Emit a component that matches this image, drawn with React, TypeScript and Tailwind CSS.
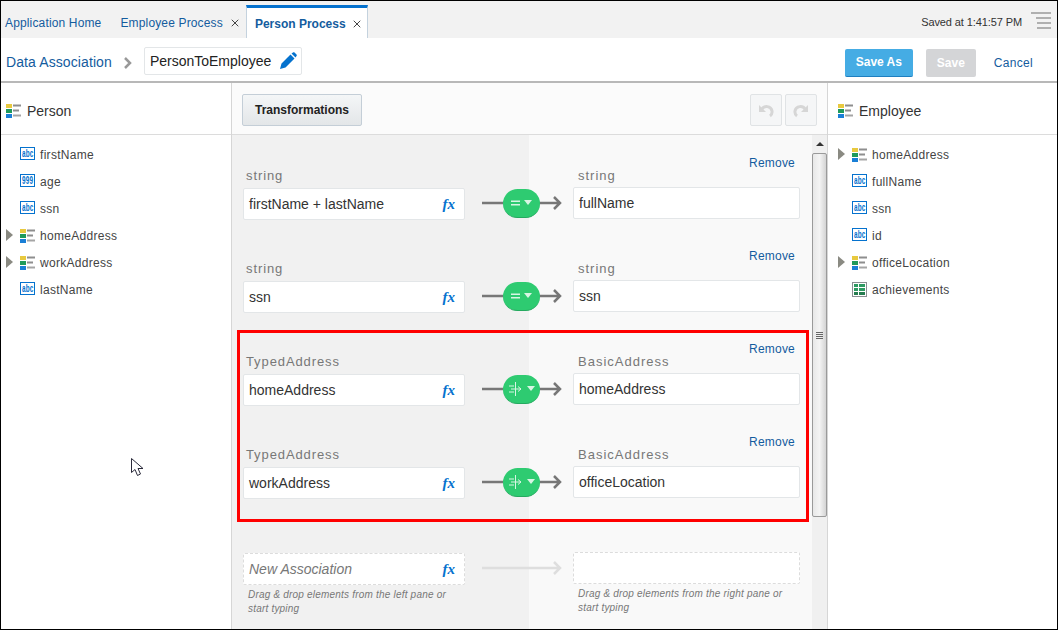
import { X } from 'lucide-react';

const FONT = "font-['Liberation_Sans',Arial,sans-serif]";

function ScalarIcon({ label }: { label: string }) {
  return (
    <svg width="15" height="13" viewBox="0 0 15 13" className="-mt-[2px] shrink-0">
      <rect x="0.5" y="0.5" width="14" height="12" fill="#fff" stroke="#0572ce" />
      <text transform="translate(2 10) scale(0.64 1)" fontSize="10" fontWeight="700" fill="#0572ce" fontFamily="Liberation Sans">
        {label}
      </text>
    </svg>
  );
}

function StructIcon() {
  return (
    <svg width="15" height="14" viewBox="0 0 15 14" className="shrink-0">
      <rect x="0" y="0" width="6" height="4" fill="#e8c93f" />
      <rect x="0" y="5" width="6" height="4" fill="#1f9a5b" />
      <rect x="0" y="10" width="6" height="4" fill="#1a7fd6" />
      <rect x="7" y="0.5" width="8" height="2" fill="#8e8e8e" />
      <rect x="7" y="5.5" width="6" height="2" fill="#8e8e8e" />
      <rect x="7" y="10.5" width="8" height="2" fill="#a5a5a5" />
    </svg>
  );
}

function TableIcon() {
  return (
    <svg width="15" height="15" viewBox="0 0 15 15" className="shrink-0">
      <rect x="0.5" y="0.5" width="14" height="14" fill="#fff" stroke="#8a8f92" />
      <rect x="2" y="2" width="11" height="3" fill="#2e9a62" />
      <rect x="2" y="6" width="11" height="3" fill="#2e9a62" />
      <rect x="2" y="10" width="11" height="3" fill="#267d50" />
      <rect x="6" y="2" width="1" height="11" fill="#fff" />
    </svg>
  );
}

function TreeRow({ name, kind }: { name: string; kind: 'abc' | '999' | 'struct' | 'table' }) {
  return (
    <div className="flex h-[27px] items-center text-[12px] tracking-[0.3px] text-[#444]">
      <div className="flex w-[19px] justify-start pl-[5px]">
        {kind === 'struct' && <div className="-mt-[2px] h-0 w-0 border-y-[6px] border-l-[7px] border-y-transparent border-l-[#8a8a82]" />}
      </div>
      <div className="flex w-[20px] items-center">
        {kind === 'struct' && <StructIcon />}
        {kind === 'table' && <TableIcon />}
        {(kind === 'abc' || kind === '999') && <ScalarIcon label={kind} />}
      </div>
      <span>{name}</span>
    </div>
  );
}

function FxMark() {
  return <span className="font-['Liberation_Serif',serif] text-[15px] font-bold italic text-[#0572ce]">fx</span>;
}

function MapPill({ mapped }: { mapped: boolean }) {
  return (
    <div className="relative flex h-[30px] w-[80px] items-center">
      <svg width="80" height="16" viewBox="0 0 80 16" className="absolute left-0 top-[7px]">
        <path d="M0 8H78M72 2l6 6-6 6" fill="none" stroke="#777" strokeWidth="2.5" />
      </svg>
      <div className="relative ml-[21px] flex h-[29px] w-[37px] items-center justify-center gap-[4px] rounded-[15px] border-b border-[#25a95f] bg-[#2ecb71]">
        {mapped ? (
          <svg width="14" height="14" viewBox="0 0 14 14">
            <path d="M6.5 0V14M0 4H5M2 7H12M9 4.5L12 7L9 9.5M0 10H5" fill="none" stroke="#d8f5e4" strokeWidth="1" />
          </svg>
        ) : (
          <svg width="9" height="6" viewBox="0 0 9 6">
            <path d="M0 0.5H9V2H0ZM0 4H9V5.5H0Z" fill="#d8f5e4" />
          </svg>
        )}
        <div className="h-0 w-0 border-x-[4px] border-t-[5px] border-x-transparent border-t-[#d8f5e4]" />
      </div>
    </div>
  );
}

function AssocRow({ left, right, leftType, rightType }: { left: string; right: string; leftType: string; rightType: string }) {
  return (
    <div className="flex h-[93px]">
      <div className="ml-[11px] w-[222px] pt-[12px]">
        <div className="h-[16px] pl-[3px] text-[13px] leading-[16px] tracking-[0.9px] text-[#777]">{leftType}</div>
        <div className="mt-[4px] flex h-[32px] items-center justify-between rounded-[2px] border border-[#e3e6e8] bg-white pl-[5px] pr-[9px] text-[14px] text-[#333]">
          <span>{left}</span>
          <FxMark />
        </div>
      </div>
      <div className="ml-[17px] w-[80px] pt-[32px]">
        <MapPill mapped={leftType !== 'string'} />
      </div>
      <div className="ml-[11px] w-[227px]">
        <div className="h-[12px] pr-[5px] text-right text-[12px] leading-[14px] tracking-[0.2px] text-[#145c9e]">Remove</div>
        <div className="h-[16px] pl-[5px] text-[13px] leading-[16px] tracking-[1px] text-[#777]">{rightType}</div>
        <div className="mt-[3px] flex h-[32px] items-center rounded-[2px] border border-[#e3e6e8] bg-white pl-[5px] text-[14px] text-[#333]">{right}</div>
      </div>
    </div>
  );
}

function NewRow() {
  return (
    <div className="flex h-[102px]">
      <div className="ml-[11px] w-[222px] pt-[25px]">
        <div className="flex h-[32px] items-center justify-between rounded-[2px] border border-dashed border-[#dcdcdc] bg-white pl-[5px] pr-[9px] text-[14px] italic text-[#777]">
          <span>New Association</span>
          <FxMark />
        </div>
        <p className="mt-[3px] pl-[5px] pr-[8px] text-[10px] italic leading-[14px] tracking-[0.2px] text-[#777]">
          Drag &amp; drop elements from the left pane or start typing
        </p>
      </div>
      <div className="ml-[17px] w-[80px] pt-[32px]">
        <svg width="80" height="16" viewBox="0 0 80 16">
          <path d="M0 8H78M72 2l6 6-6 6" fill="none" stroke="#dedede" strokeWidth="2.5" />
        </svg>
      </div>
      <div className="ml-[11px] w-[227px] pt-[24px]">
        <div className="h-[32px] rounded-[2px] border border-dashed border-[#dcdcdc] bg-white" />
        <p className="mt-[3px] pl-[5px] pr-[8px] text-[10px] italic leading-[14px] tracking-[0.2px] text-[#777]">
          Drag &amp; drop elements from the right pane or start typing
        </p>
      </div>
    </div>
  );
}

function Scrollbar() {
  return (
    <div className="flex w-[15px] shrink-0 flex-col bg-[#f0f0f0]">
      <div className="flex h-[18px] items-center justify-center">
        <div className="h-0 w-0 border-x-[4px] border-b-[4px] border-x-transparent border-b-[#333]" />
      </div>
      <div className="flex h-[364px] items-center justify-center rounded-[2px] border border-[#9a9a9a] bg-gradient-to-r from-[#e8e8e8] via-[#f4f4f4] to-[#d4d4d4]">
        <div className="flex w-[7px] flex-col gap-[1px]">
          <div className="h-px bg-[#666]" />
          <div className="h-px bg-[#666]" />
          <div className="h-px bg-[#666]" />
          <div className="h-px bg-[#666]" />
        </div>
      </div>
    </div>
  );
}

function HistoryIcon({ flip }: { flip?: boolean }) {
  return (
    <svg width="16" height="16" viewBox="0 0 16 16" className={flip ? '-scale-x-100' : ''}>
      <path d="M1 3V10H8Z" fill="#d6d6d6" />
      <path d="M4 7C6 3.500 13 3.500 14 9C14.300 11 13.500 13 12 14" fill="none" stroke="#d6d6d6" strokeWidth="3" />
    </svg>
  );
}

export default function App() {
  return (
    <div className={`${FONT} flex h-[630px] w-[1058px] flex-col overflow-hidden border border-black bg-white`}>
      {/* tab strip */}
      <div className="flex h-[37px] shrink-0 items-stretch bg-[#f2f2f2] text-[12px] tracking-[0.15px] text-[#145c9e]">
        <div className="flex items-center pl-[4px] pr-[19px] pt-[6px]">Application Home</div>
        <div className="flex items-center pt-[6px]">
          Employee Process
          <X className="ml-[6px] h-[12px] w-[12px] text-[#444]" strokeWidth={2} />
        </div>
        <div className="ml-[5px] mt-[4px] flex items-center border-x border-t-[3px] border-x-[#c4d2de] border-t-[#0572ce] bg-white pl-[8px] pr-[4px] pt-[2px] font-bold tracking-normal">
          <span>Person Process</span>
          <X className="ml-[5px] h-[12px] w-[12px] text-[#444]" strokeWidth={2} />
        </div>
        <div className="ml-auto flex items-center pr-[6px] text-[11px] tracking-[-0.1px] text-[#333]">
          <span className="pt-[6px]">Saved at 1:41:57 PM</span>
          <svg width="20" height="18" viewBox="0 0 20 18" className="ml-[9px]">
            <path d="M0 2H20M5 7H20M6 12H20M6 17H20" stroke="#999" strokeWidth="1.5" />
          </svg>
        </div>
      </div>

      {/* breadcrumb toolbar */}
      <div className="flex h-[45px] shrink-0 items-center border-b-2 border-[#b8b8b8] pl-[5px] pr-[24px] pt-[2px]">
        <span className="pt-[4px] text-[14px] tracking-[0.1px] text-[#145c9e]">Data Association</span>
        <svg width="8" height="12" viewBox="0 0 8 12" className="ml-[12px] mt-[4px]">
          <path d="M1 1L6 6L1 11" fill="none" stroke="#999" strokeWidth="2.5" />
        </svg>
        <div className="ml-[12px] flex h-[28px] w-[158px] items-center justify-between rounded-[2px] border border-[#e3e6e8] pl-[5px] pr-[4px] text-[14px] text-[#222]">
          <span className="pt-[2px]">PersonToEmployee</span>
          <svg width="17" height="17" viewBox="0 0 17 17">
            <path d="M0 17L1.500 11.500L10.500 2.500L14.500 6.500L5.500 15.500ZM11.500 1.500L13 0.500C13.500 0 14 0 14.500 0.500L16.500 2.500C17 3 17 3.500 16.500 4L15.500 5.500Z" fill="#0572ce" />
          </svg>
        </div>
        <div className="ml-auto mt-[4px] flex items-center">
          <div className="flex h-[28px] w-[68px] items-center justify-center rounded-[2px] border-b border-[#1f7fc0] bg-[#45ace4] text-[12px] font-bold text-white">Save As</div>
          <div className="ml-[13px] flex h-[28px] w-[50px] items-center justify-center rounded-[2px] bg-[#d4d5d7] text-[12px] font-bold text-white">Save</div>
          <span className="ml-[18px] text-[12px] tracking-[0.3px] text-[#145c9e]">Cancel</span>
        </div>
      </div>

      <div className="flex min-h-0 flex-1">
        {/* source tree */}
        <div className="flex w-[231px] shrink-0 flex-col border-r border-[#d6d6d6]">
          <div className="flex h-[52px] shrink-0 items-center gap-[6px] border-b border-[#dcdcdc] pl-[5px] pt-[5px] text-[14px] text-[#333]">
            <StructIcon />
            Person
          </div>
          <div className="pt-[6px]">
            <TreeRow name="firstName" kind="abc" />
            <TreeRow name="age" kind="999" />
            <TreeRow name="ssn" kind="abc" />
            <TreeRow name="homeAddress" kind="struct" />
            <TreeRow name="workAddress" kind="struct" />
            <TreeRow name="lastName" kind="abc" />
          </div>
        </div>

        {/* mappings */}
        <div className="flex w-[596px] shrink-0 flex-col border-r border-[#d6d6d6]">
          <div className="flex h-[52px] shrink-0 items-center justify-between border-b border-[#dcdcdc] bg-[#fbfbfb] px-[10px] pt-[2px]">
            <div className="flex h-[32px] w-[120px] items-center justify-center rounded-[2px] border border-[#c4ced7] bg-gradient-to-b from-[#f4f6f7] to-[#e3e6e8] pt-[1px] text-[12px] font-bold text-[#222]">
              Transformations
            </div>
            <div className="flex gap-[3px]">
              <div className="flex h-[32px] w-[32px] items-center justify-center rounded-[2px] border border-[#e0e3e5] bg-[#f5f6f7]">
                <HistoryIcon />
              </div>
              <div className="flex h-[32px] w-[32px] items-center justify-center rounded-[2px] border border-[#e0e3e5] bg-[#f5f6f7]">
                <HistoryIcon flip />
              </div>
            </div>
          </div>
          <div className="relative flex min-h-0 flex-1">
            <div className="flex-1 bg-[linear-gradient(to_right,#f1f1f1_297px,#f9f9f9_297px)] pt-[21px]">
              <AssocRow leftType="string" rightType="string" left="firstName + lastName" right="fullName" />
              <AssocRow leftType="string" rightType="string" left="ssn" right="ssn" />
              <AssocRow leftType="TypedAddress" rightType="BasicAddress" left="homeAddress" right="homeAddress" />
              <AssocRow leftType="TypedAddress" rightType="BasicAddress" left="workAddress" right="officeLocation" />
              <NewRow />
            </div>
            <Scrollbar />
            {/* annotation drawn over the screenshot */}
            <div className="absolute left-[5px] top-[195px] h-[192px] w-[572px] border-[3px] border-[#ff0000]" />
          </div>
        </div>

        {/* target tree */}
        <div className="flex min-w-0 flex-1 flex-col">
          <div className="flex h-[52px] shrink-0 items-center gap-[6px] border-b border-[#dcdcdc] pl-[10px] pt-[5px] text-[14px] text-[#333]">
            <StructIcon />
            Employee
          </div>
          <div className="pl-[5px] pt-[6px]">
            <TreeRow name="homeAddress" kind="struct" />
            <TreeRow name="fullName" kind="abc" />
            <TreeRow name="ssn" kind="abc" />
            <TreeRow name="id" kind="abc" />
            <TreeRow name="officeLocation" kind="struct" />
            <TreeRow name="achievements" kind="table" />
          </div>
        </div>
      </div>

      {/* mouse pointer caught in the capture */}
      <svg width="14" height="20" viewBox="0 0 14 20" className="absolute left-[131px] top-[458px]">
        <path d="M0.5 0.5V14.5L4 11.5L6.5 17.5L9.5 16L7 10.5H12Z" fill="#fff" stroke="#2a2a3a" strokeWidth="1" />
      </svg>
    </div>
  );
}
